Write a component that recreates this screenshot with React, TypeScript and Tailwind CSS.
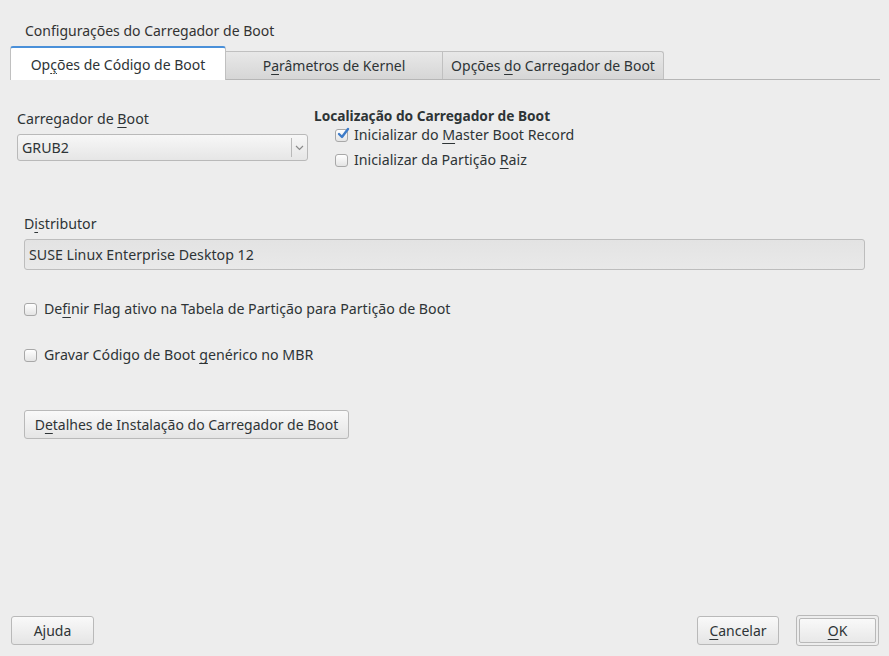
import React from "react";

const font = { fontFamily: '"Noto Sans", "DejaVu Sans", sans-serif' };

function U({ children }: { children: React.ReactNode }) {
  return <span className="underline underline-offset-[3px] decoration-1">{children}</span>;
}

function CheckBox({ checked }: { checked?: boolean }) {
  return (
    <span className="relative inline-block w-[13px] h-[13px] shrink-0 rounded-[3px] border border-[#a8a8a8] bg-gradient-to-b from-[#ffffff] to-[#e4e4e4]">
      {checked && (
        <svg className="absolute -top-[3px] left-[1px]" width="13" height="13" viewBox="0 0 13 13">
          <path d="M2 7 L5 10 L11 2" fill="none" stroke="#3d7bc8" strokeWidth="2.4" strokeLinecap="round" strokeLinejoin="round" />
        </svg>
      )}
    </span>
  );
}

function Button({ children, className = "" }: { children: React.ReactNode; className?: string }) {
  return (
    <button className={`h-[29px] rounded-[3px] border border-[#b9b9b9] bg-gradient-to-b from-[#f9f9f9] to-[#e5e5e5] text-[14px] text-[#2e3436] ${className}`}>
      {children}
    </button>
  );
}

export default function App() {
  return (
    <div style={font} className="w-[889px] h-[656px] bg-[#ededed] text-[#2e3436] flex flex-col overflow-hidden">
      <div className="pt-[21px] pl-[25px] text-[14px] leading-[20px] text-[#333]">
        Configurações do Carregador de Boot
      </div>

      <div className="mt-[5px] ml-[10px] mr-[9px] flex items-end border-b border-[#b6b6b6] text-[14px]">
        <div className="w-[216px] h-[34px] -mb-px bg-white border-x border-t-2 border-t-[#4a90d9] border-x-[#c0c0c0] rounded-t-[3px] flex items-center justify-center">
          <span>Op<U>ç</U>ões de Código de Boot</span>
        </div>
        <div className="w-[217px] h-[28px] bg-gradient-to-b from-[#e8e8e8] to-[#d6d6d6] border-t border-r border-[#c0c0c0] flex items-center justify-center">
          <span>P<U>a</U>râmetros de Kernel</span>
        </div>
        <div className="w-[221px] h-[28px] bg-gradient-to-b from-[#e8e8e8] to-[#d6d6d6] border-t border-r border-[#c0c0c0] rounded-tr-[3px] flex items-center justify-center">
          <span>Opções <U>d</U>o Carregador de Boot</span>
        </div>
      </div>

      <div className="flex-1 flex flex-col text-[14.2px]">
        <div className="flex pt-[28px] pl-[17px]">
          <div className="w-[291px] flex flex-col">
            <div className="leading-[20px] mt-[1px]">Carregador de <U>B</U>oot</div>
            <div className="mt-[5px] h-[27px] rounded-[3px] border border-[#b9b9b9] bg-gradient-to-b from-[#f7f7f7] to-[#e6e6e6] flex items-center">
              <span className="flex-1 pl-[4px]">GRUB2</span>
              <span className="h-[19px] border-l border-[#b9b9b9] w-[16px] flex items-center justify-center">
                <svg width="9" height="6" viewBox="0 0 9 6">
                  <path d="M1 1 L4.5 4.5 L8 1" fill="none" stroke="#8a8a8a" strokeWidth="1.2" />
                </svg>
              </span>
            </div>
          </div>
          <div className="ml-[6px] flex flex-col">
            <div className="font-bold text-[13.7px] leading-[18px] -mt-[1px]">Localização do Carregador de Boot</div>
            <label className="ml-[21px] flex items-center gap-[6px] leading-[20px]">
              <CheckBox checked />
              <span>Inicializar do <U>M</U>aster Boot Record</span>
            </label>
            <label className="ml-[21px] flex items-center gap-[6px] leading-[20px] mt-[5px]">
              <CheckBox />
              <span>Inicializar da Partição <U>R</U>aiz</span>
            </label>
          </div>
        </div>

        <div className="pl-[24px] pr-[24px] mt-[44px]">
          <div className="leading-[20px]">D<U>i</U>stributor</div>
          <div className="mt-[5px] h-[31px] rounded-[3px] border border-[#bdbdbd] bg-gradient-to-b from-[#e3e3e3] to-[#e9e9e9] flex items-center pl-[4px]">
            SUSE Linux Enterprise Desktop 12
          </div>
        </div>

        <label className="pl-[24px] mt-[29px] flex items-center gap-[7px] leading-[20px]">
          <CheckBox />
          <span>De<U>f</U>inir Flag ativo na Tabela de Partição para Partição de Boot</span>
        </label>

        <label className="pl-[24px] mt-[26px] flex items-center gap-[7px] leading-[20px]">
          <CheckBox />
          <span>Gravar Código de Boot <U>g</U>enérico no MBR</span>
        </label>

        <div className="pl-[24px] mt-[45px]">
          <Button className="w-[325px]">
            D<U>e</U>talhes de Instalação do Carregador de Boot
          </Button>
        </div>
      </div>

      <div className="flex items-center pl-[11px] pr-[10px] pb-[11px]">
        <Button className="w-[83px]">Ajuda</Button>
        <div className="flex-1" />
        <Button className="w-[82px]">
          <U>C</U>ancelar
        </Button>
        <div className="ml-[17px] rounded-[3px] border border-[#b9b9b9] p-[2px] -my-[1px]">
          <div className="w-[77px] h-[25px] rounded-[2px] border border-[#b9b9b9] bg-gradient-to-b from-[#f9f9f9] to-[#e8e8e8] flex items-center justify-center text-[14px]">
            <span><U>O</U>K</span>
          </div>
        </div>
      </div>
    </div>
  );
}
